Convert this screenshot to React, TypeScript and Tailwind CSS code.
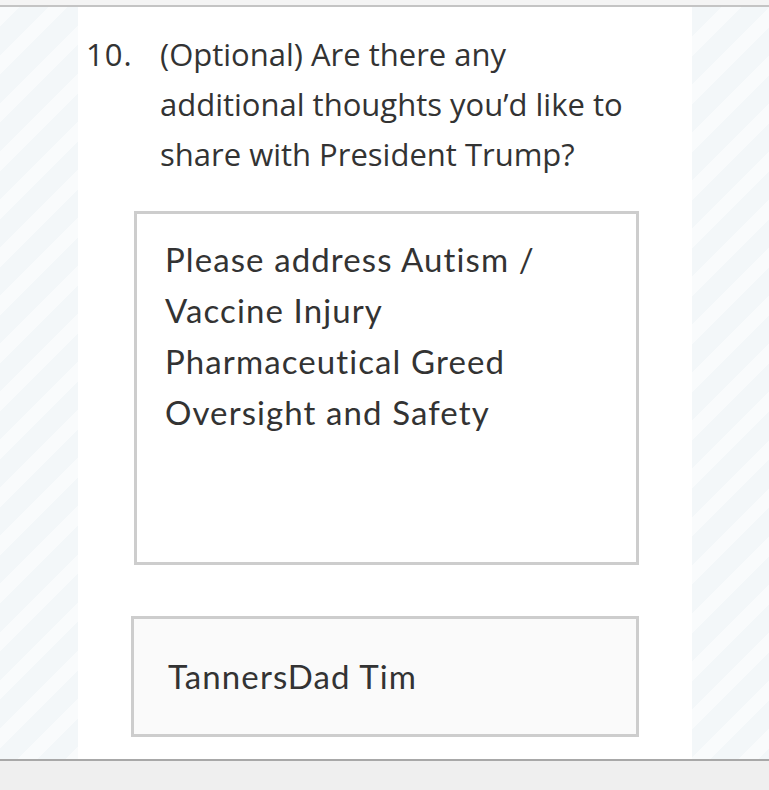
const stripes =
  'bg-[#f3f7f9] bg-[repeating-linear-gradient(135deg,rgba(255,255,255,0.5)_0px,rgba(255,255,255,0.5)_14px,transparent_14px,transparent_34px)]'

export default function App() {
  return (
    <div className="flex h-[790px] w-[769px] flex-col bg-[#efefef] text-[#333]">
      {/* top strip */}
      <div className="h-[7px] border-b-2 border-[#c4c4c4] bg-[#f4f4f4]" />

      <div className={`flex flex-1 ${stripes}`}>
        <div className="w-[78px]" />
        <div className="flex w-[614px] flex-col bg-white pl-[8px] pt-[22px]">
          {/* question */}
          <div className="flex font-['Open_Sans',sans-serif] text-[31px] leading-[50px]">
            <span className="w-[74px] shrink-0 tracking-[1px]">10.</span>
            <p>
              (Optional) Are there any
              <br />
              additional thoughts you’d like to
              <br />
              share with President Trump?
            </p>
          </div>

          {/* answer */}
          <div className="ml-[48px] mt-[32px] h-[354px] w-[505px] border-[3px] border-[#cdcdcd] bg-white px-[28px] pt-[20px] font-['Lato',sans-serif] text-[33px] leading-[51px] tracking-[1.1px]">
            <div>Please address Autism /</div>
            <div>Vaccine Injury</div>
            <div>Pharmaceutical Greed</div>
            <div>Oversight and Safety</div>
          </div>

          {/* name */}
          <div className="ml-[45px] mt-[51px] flex h-[121px] w-[508px] items-center border-[3px] border-[#cdcdcd] bg-[#fafafa] px-[34px] font-['Lato',sans-serif] text-[33px] tracking-[1.1px]">
            TannersDad Tim
          </div>
        </div>
        <div className="flex-1" />
      </div>

      {/* bottom */}
      <div className="h-[31px] border-t-2 border-[#a8a8a8] bg-[#efefef]" />
    </div>
  )
}
